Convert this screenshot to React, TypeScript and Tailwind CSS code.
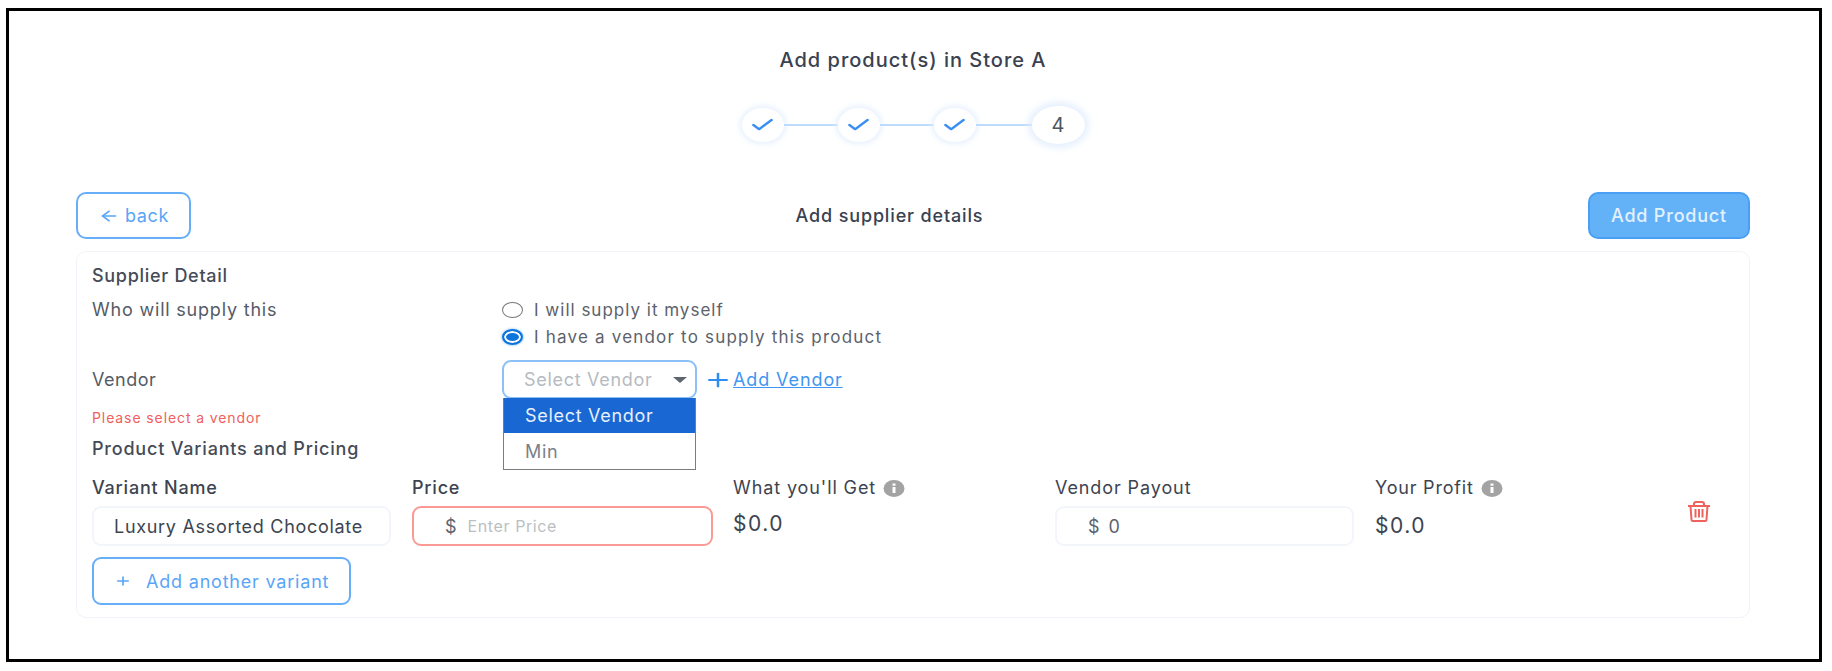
import React from 'react';
import { ArrowLeft, Check, Plus } from 'lucide-react';

const font = { fontFamily: '"Inter", "Liberation Sans", sans-serif' };

const DoneStep = () => (
  <div className="w-[42px] h-[34px] rounded-[50%] bg-white shadow-[0_0_6px_2px_#e3effd] flex items-center justify-center">
    <Check className="w-[27px] h-[20px] shrink-0 text-[#3b8ff3]" strokeWidth={2.6} preserveAspectRatio="none" />
  </div>
);

const Line = ({ w }: { w: string }) => <div className={`h-[2px] bg-[#bcdcfb] ${w}`}></div>;

const InfoDot = () => (
  <svg className="w-[22px] h-[17px] ml-[7px]" viewBox="0 0 22 17">
    <ellipse cx="11" cy="8.5" rx="10.5" ry="8.5" fill="#a3a3a3" />
    <rect x="9.5" y="7" width="3" height="6" fill="#fff" />
    <rect x="9.5" y="3.5" width="3" height="2.2" fill="#fff" />
  </svg>
);

const TrashIcon = () => (
  <svg className="mt-[23px] w-[24px] h-[21px] text-[#f0625e]" viewBox="0 0 24 21" fill="none" stroke="currentColor" strokeWidth="2">
    <path d="M1 5h22" />
    <path d="M7 5V3a2 2 0 0 1 2-2h6a2 2 0 0 1 2 2v2" />
    <path d="M3.5 5l1 13.5a1.5 1.5 0 0 0 1.5 1.5h12a1.5 1.5 0 0 0 1.5-1.5l1-13.5" />
    <path d="M8.5 8v8.5M12 8v8.5M15.5 8v8.5" strokeWidth="2" />
  </svg>
);

const App = () => {
  return (
    <div className="min-h-screen bg-white pt-[8px] pl-[6px]" style={font}>
      <div className="w-[1816px] h-[654px] border-[3px] border-black text-[#3d4450] pl-[67px] pr-[69px] pt-[37px]">
        <h1 className="text-center text-[20px] leading-6 font-medium tracking-[1px] text-[#3a4150]">Add product(s) in Store A</h1>

        <div className="flex items-center justify-center mt-[34px] h-[38px]">
          <DoneStep />
          <Line w="w-[54px]" />
          <DoneStep />
          <Line w="w-[54px]" />
          <DoneStep />
          <Line w="w-[56px]" />
          <div className="w-[53px] h-[38px] rounded-[50%] bg-white shadow-[0_0_8px_3px_#dfecfd] flex items-center justify-center text-[20px] text-[#4b5563]">4</div>
        </div>

        <div className="flex items-center justify-between mt-[48px]">
          <button className="w-[115px] h-[47px] rounded-[10px] border-2 border-[#66aef8] flex items-center justify-center gap-[5px] text-[#5aa5f7] text-[18px] tracking-[0.6px]">
            <ArrowLeft className="w-[22px] h-[16px]" strokeWidth={2.2} preserveAspectRatio="none" />
            back
          </button>
          <div className="text-[18px] font-medium tracking-[0.85px] text-[#3a4150]">Add supplier details</div>
          <button className="w-[162px] h-[47px] rounded-[10px] border-2 border-[#4a9ff5] bg-[#63b2f7] text-[#e4f1fd] text-[18px] font-medium tracking-[0.8px]">Add Product</button>
        </div>

        <div className="relative mt-[12px] h-[367px] rounded-[10px] border border-[#f1f3f8] pl-[15px] pt-[14px]">
          <div className="text-[18px] leading-5 font-medium text-[#454b57] tracking-[0.7px]">Supplier Detail</div>

          <div className="flex mt-[14px]">
            <div className="w-[410px] text-[18px] leading-5 text-[#555b66] tracking-[0.8px]">Who will supply this</div>
            <div className="flex flex-col gap-[7px] text-[17px] leading-5 text-[#5c626c]">
              <div className="flex items-center gap-[11px] tracking-[1px]">
                <span className="w-[21px] h-[16px] rounded-[50%] border border-[#767676] bg-white"></span>
                I will supply it myself
              </div>
              <div className="flex items-center gap-[11px] tracking-[1.2px]">
                <span className="w-[21px] h-[16px] rounded-[50%] border-2 border-[#0f75dc] bg-[#0f75dc] shadow-[inset_0_0_0_2px_#fff,0_0_2px_1px_#bcdcfb]"></span>
                I have a vendor to supply this product
              </div>
            </div>
          </div>

          <div className="flex items-center mt-[13px]">
            <div className="w-[410px] text-[18px] leading-5 text-[#555b66] tracking-[0.5px]">Vendor</div>
            <div className="w-[195px] h-[39px] rounded-[9px] border-2 border-[#8bc0f8] flex items-center justify-between pl-[20px] pr-[8px] text-[18px] text-[#b5bbc0] tracking-[0.7px]">
              Select Vendor
              <span className="w-0 h-0 border-x-[7px] border-x-transparent border-t-[6px] border-t-[#5f6670]"></span>
            </div>
            <Plus className="ml-[6px] w-[30px] h-[22px] text-[#2f8df0]" strokeWidth={2} preserveAspectRatio="none" />
            <a className="text-[18px] text-[#3f96f2] underline tracking-[0.9px]">Add Vendor</a>
          </div>

          <div className="mt-[11px] text-[14px] leading-4 text-[#f0605c] tracking-[0.9px]">Please select a vendor</div>
          <div className="mt-[13px] text-[18px] leading-5 font-medium text-[#454b57] tracking-[0.8px]">Product Variants and Pricing</div>

          <div className="flex mt-[19px]">
            <div className="w-[320px]">
              <div className="text-[18px] leading-5 font-medium tracking-[0.8px]">Variant Name</div>
              <div className="mt-[8px] w-[299px] h-[40px] rounded-[9px] border-2 border-[#f2f5fa] flex items-center pl-[20px] text-[18px] tracking-[0.7px] whitespace-nowrap">Luxury Assorted Chocolate</div>
            </div>
            <div className="w-[321px]">
              <div className="text-[18px] leading-5 font-medium tracking-[0.8px]">Price</div>
              <div className="mt-[8px] w-[301px] h-[40px] rounded-[9px] border-2 border-[#fb9a94] flex items-center pl-[31px] gap-[11px] text-[18px] text-[#5c626c]">
                $
                <span className="text-[16px] text-[#b9bfc3] tracking-[0.6px]">Enter Price</span>
              </div>
            </div>
            <div className="w-[322px]">
              <div className="flex items-center text-[18px] leading-5 tracking-[0.9px]">What you'll Get<InfoDot /></div>
              <div className="mt-[14px] text-[21px] leading-6 tracking-[1.5px]">$0.0</div>
            </div>
            <div className="w-[320px]">
              <div className="text-[18px] leading-5 tracking-[0.9px]">Vendor Payout</div>
              <div className="mt-[8px] w-[299px] h-[40px] rounded-[9px] border-2 border-[#f2f5fa] flex items-center pl-[31px] gap-[9px] text-[18px] text-[#5c626c]">
                <span>$</span>
                <span className="tracking-[1px]">0</span>
              </div>
            </div>
            <div className="w-[312px]">
              <div className="flex items-center text-[18px] leading-5 tracking-[0.8px]">Your Profit<InfoDot /></div>
              <div className="mt-[16px] text-[21px] leading-6 tracking-[1.5px]">$0.0</div>
            </div>
            <TrashIcon />
          </div>

          <button className="mt-[11px] w-[259px] h-[48px] rounded-[9px] border-2 border-[#66aef8] flex items-center pl-[20px] gap-[14px] text-[#5aa5f7] text-[18px] tracking-[0.8px]">
            <Plus className="w-[18px] h-[14px]" strokeWidth={2.2} preserveAspectRatio="none" />
            Add another variant
          </button>

          {/* open vendor dropdown, sits over the rows below */}
          <div className="absolute left-[426px] top-[146px] w-[193px] h-[72px] border border-[#7c7c7c] border-t-0 bg-white text-[18px] tracking-[0.7px] z-10">
            <div className="h-[35px] bg-[#1967d2] text-[#e8f0fc] flex items-center pl-[21px]">Select Vendor</div>
            <div className="h-[36px] text-[#7c8087] flex items-center pl-[21px]">Min</div>
          </div>
        </div>
      </div>
    </div>
  );
};

export default App;
